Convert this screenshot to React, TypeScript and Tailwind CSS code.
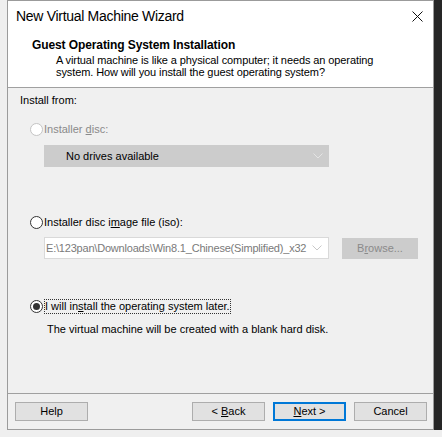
import React from 'react';

const font = "font-['Liberation_Sans',Arial,sans-serif]";

// small thin chevron used by the combo boxes
const Chevron = ({ color }: { color: string }) => (
  <svg width="10" height="6" viewBox="0 0 10 6" className="shrink-0">
    <path d="M0.5 0.5 L5 5 L9.5 0.5" fill="none" stroke={color} strokeWidth="1" />
  </svg>
);

const Radio = ({ checked, disabled }: { checked?: boolean; disabled?: boolean }) => (
  <span
    className={`flex h-[13px] w-[13px] shrink-0 items-center justify-center rounded-full border bg-white ${
      disabled ? 'border-[#c4c4c4] bg-[#f4f4f4]' : 'border-[#333333]'
    }`}
  >
    {checked && <span className="h-[7px] w-[7px] rounded-full bg-[#333333]" />}
  </span>
);

const WizButton = ({ children, primary }: { children: React.ReactNode; primary?: boolean }) => (
  <div
    className={`flex h-[19px] w-[73px] items-center justify-center bg-[#e1e1e1] text-[11px] text-black ${
      primary ? 'border-2 border-[#0078d7]' : 'border border-[#adadad]'
    }`}
  >
    <span className="whitespace-pre">{children}</span>
  </div>
);

export default function App() {
  return (
    <div className={`flex h-[437px] w-[442px] bg-[#efefef] ${font}`}>
      <div className="w-[7px]" />
      <div className="flex flex-col">
        <div className="flex h-[430px] w-[427px] flex-col border border-[#9b9b9b] bg-[#f0f0f0]">
          {/* title bar */}
          <div className="flex h-[30px] items-center justify-between bg-white pl-[8px] pr-[10px]">
            <span className="text-[14px] tracking-[-0.3px] text-black">New Virtual Machine Wizard</span>
            <svg width="11" height="11" viewBox="0 0 11 11">
              <path d="M0.5 0.5 L10.5 10.5 M10.5 0.5 L0.5 10.5" stroke="#111" strokeWidth="1" />
            </svg>
          </div>

          {/* header */}
          <div className="h-[57px] border-b border-[#a0a0a0] bg-white pl-[24px] pt-[7px]">
            <div className="text-[12px] font-bold leading-[14px] tracking-[-0.1px] text-black">
              Guest Operating System Installation
            </div>
            <div className="pl-[24px] pt-[2px] text-[11px] leading-[12px] tracking-[-0.1px] text-black">
              A virtual machine is like a physical computer; it needs an operating
              <br />
              system. How will you install the guest operating system?
            </div>
          </div>

          {/* body */}
          <div className="flex flex-1 flex-col text-[11px]">
            <div className="pl-[12px] pt-[5px] leading-[15px] text-black">Install from:</div>

            <div className="mt-[14px] flex h-[15px] items-center gap-[1px] pl-[22px] text-[#8a8a8a]">
              <Radio disabled />
              <span>
                Installer <span className="underline">d</span>isc:
              </span>
            </div>
            <div className="ml-[36px] mt-[8px] flex h-[22px] w-[285px] items-center justify-between bg-[#cccccc] pl-[22px] pr-[6px] text-black">
              <span>No drives available</span>
              <Chevron color="#e4e4e4" />
            </div>

            <div className="mt-[48px] flex h-[15px] items-center gap-[1px] pl-[22px] text-black">
              <Radio />
              <span>
                Installer disc i<span className="underline">m</span>age file (iso):
              </span>
            </div>
            <div className="mt-[7px] flex items-center">
              <div className="ml-[36px] flex h-[22px] w-[285px] items-center justify-between border border-[#d9d9d9] bg-white pl-[1px] pr-[6px] text-[#7a7a7a]">
                <span className="whitespace-nowrap tracking-[-0.2px]">
                  E:\123pan\Downloads\Win8.1_Chinese(Simplified)_x32
                </span>
                <Chevron color="#c8c8c8" />
              </div>
              <div className="ml-[13px] flex h-[21px] w-[76px] items-center justify-center bg-[#cccccc] text-[#8a8a8a]">
                <span>
                  B<span className="underline">r</span>owse...
                </span>
              </div>
            </div>

            <div className="mt-[40px] flex h-[15px] items-center gap-[1px] pl-[22px] text-black">
              <Radio checked />
              <span className="border border-dotted border-[#333] leading-[13px]">
                I will in<span className="underline">s</span>tall the operating system later.
              </span>
            </div>
            <div className="mt-[8px] pl-[39px] leading-[15px] text-black">
              The virtual machine will be created with a blank hard disk.
            </div>

            <div className="flex-1" />

            {/* footer */}
            <div className="flex h-[36px] items-start border-t border-[#a0a0a0] pl-[7px] pt-[8px]">
              <WizButton>Help</WizButton>
              <div className="w-[104px]" />
              <WizButton>
                {'< '}
                <span className="underline">B</span>
                {'ack'}
              </WizButton>
              <div className="w-[8px]" />
              <WizButton primary>
                <span className="underline">N</span>
                {'ext >'}
              </WizButton>
              <div className="w-[8px]" />
              <WizButton>Cancel</WizButton>
            </div>
          </div>
        </div>
      </div>
      <div className="h-[430px] w-[8px] bg-[#262626]" />
    </div>
  );
}
